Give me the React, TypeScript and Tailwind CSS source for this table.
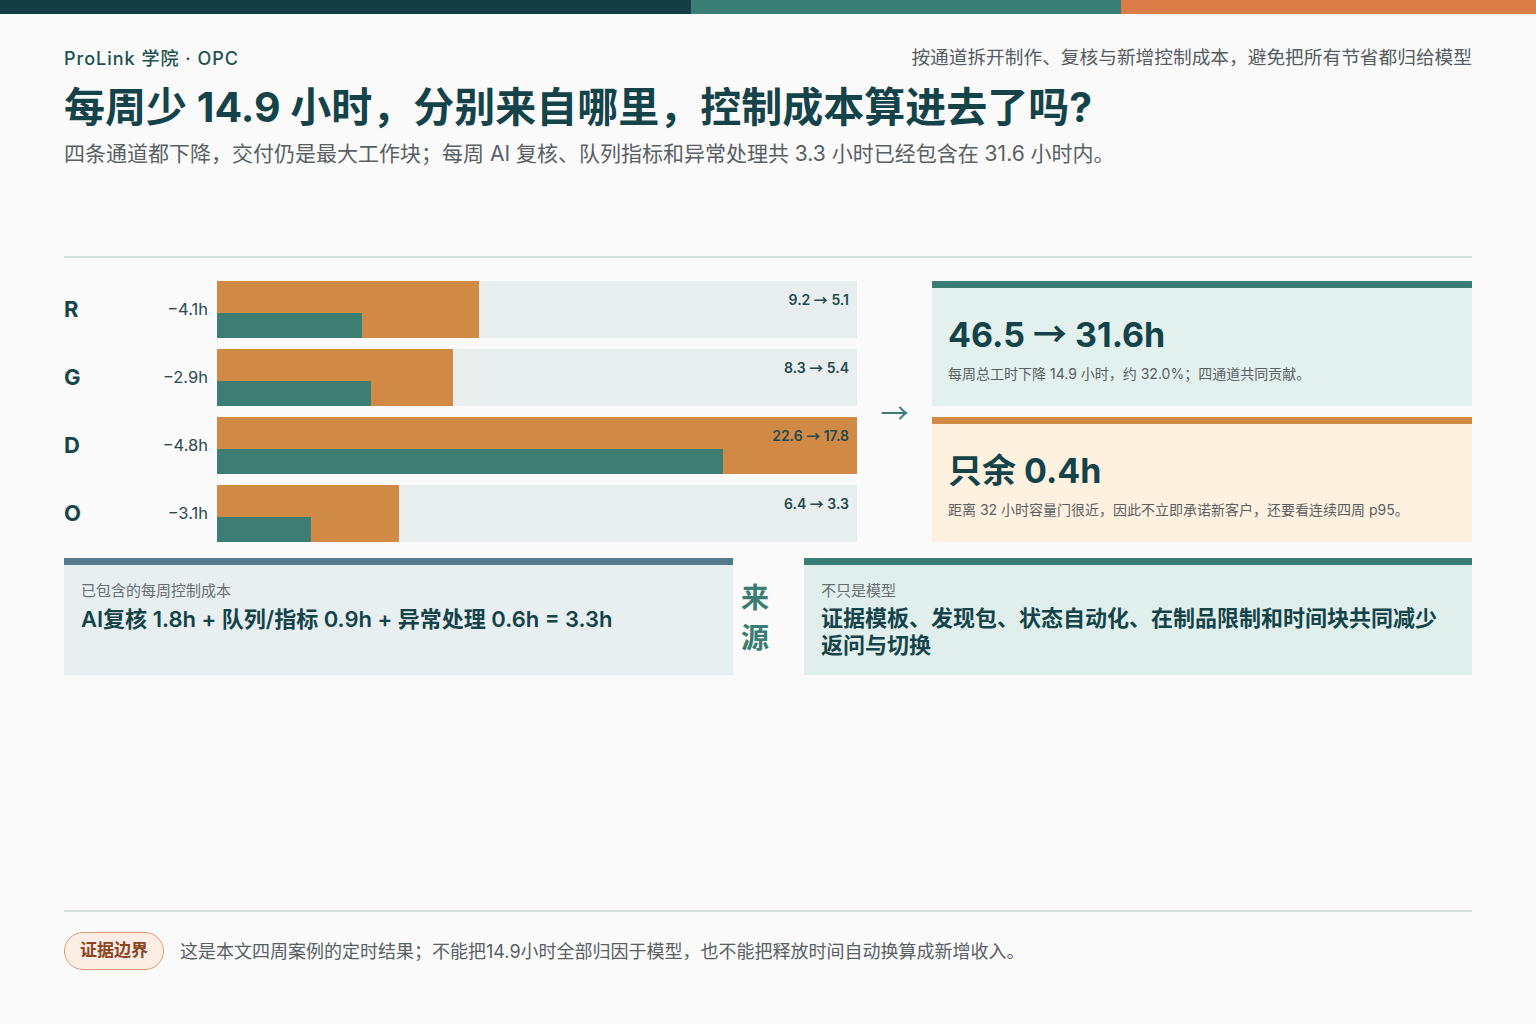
import React from 'react';

const FONT = '"Inter", "Noto Sans CJK SC", "Noto Sans", sans-serif';
const ARROW_FONT = '"Noto Sans CJK SC", "DejaVu Sans", sans-serif';

type Lane = { key: string; delta: string; before: number; after: number };

const lanes: Lane[] = [
  { key: 'R', delta: '−4.1h', before: 9.2, after: 5.1 },
  { key: 'G', delta: '−2.9h', before: 8.3, after: 5.4 },
  { key: 'D', delta: '−4.8h', before: 22.6, after: 17.8 },
  { key: 'O', delta: '−3.1h', before: 6.4, after: 3.3 },
];

const MAX = 22.5;

function Arrow() {
  return (
    <span className="inline-block leading-none" style={{ fontFamily: ARROW_FONT }}>
      →
    </span>
  );
}

function LaneRow({ lane }: { lane: Lane }) {
  return (
    <div className="flex h-[57px] items-center">
      <div className="w-[60px] text-[22px] font-bold text-[#174449]">{lane.key}</div>
      <div className="w-[84px] text-right text-[16.5px] text-[#2b4a4e]">{lane.delta}</div>
      <div className="relative ml-[9px] h-full flex-1 bg-[#e8eeed]">
        <div
          className="absolute left-0 top-0 h-full bg-[#d08a45]"
          style={{ width: `${Math.min(lane.before / MAX, 1) * 100}%` }}
        />
        <div
          className="absolute bottom-0 left-0 h-[25px] bg-[#3c7d74]"
          style={{ width: `${(lane.after / MAX) * 100}%` }}
        />
        <div className="absolute right-[8px] top-[8px] text-[14px] font-semibold leading-[22px] text-[#234a4f]">
          {lane.before} <Arrow /> {lane.after}
        </div>
      </div>
    </div>
  );
}

export default function App() {
  return (
    <div
      className="flex h-[1024px] w-[1536px] flex-col bg-[#fafafa] text-[#174449]"
      style={{ fontFamily: FONT }}
    >
      {/* colour strip */}
      <div className="flex h-[14px] w-full">
        <div className="w-[691px] bg-[#143d44]" />
        <div className="w-[430px] bg-[#3a7d74]" />
        <div className="flex-1 bg-[#d97c45]" />
      </div>

      <div className="flex flex-1 flex-col px-16">
        {/* header */}
        <div className="mt-[32px] flex h-[24px] items-center justify-between">
          <div className="text-[18px] font-medium tracking-[1px] text-[#1d5250]">ProLink 学院 · OPC</div>
          <div className="text-[18.7px] text-[#555b5f]">按通道拆开制作、复核与新增控制成本，避免把所有节省都归给模型</div>
        </div>
        <h1 className="mt-[13px] text-[41px] font-bold leading-[48px] text-[#15434a]">
          每周少 14.9 小时，分别来自哪里，控制成本算进去了吗?
        </h1>
        <p className="mt-[9px] text-[21px] leading-[28px] text-[#596064]">
          四条通道都下降，交付仍是最大工作块；每周 AI 复核、队列指标和异常处理共 3.3 小时已经包含在 31.6 小时内。
        </p>

        <div className="mt-[88px] h-[2px] bg-[#d3e3df]" />

        {/* chart + summary */}
        <div className="mt-[23px] flex">
          <div className="flex w-[793px] flex-col gap-[11px]">
            {lanes.map((l) => (
              <LaneRow key={l.key} lane={l} />
            ))}
          </div>
          <div
            className="flex w-[75px] items-center justify-center text-[28px] text-[#3a7d74]"
            style={{ fontFamily: ARROW_FONT }}
          >
            →
          </div>
          <div className="flex flex-1 flex-col gap-[11px]">
            <div className="h-[125px] border-t-[7px] border-[#3a7d74] bg-[#e2f1ed] px-[16px] pt-[25px]">
              <div className="text-[34px] font-bold leading-[44px] text-[#15434a]">
                46.5 <Arrow /> 31.6h
              </div>
              <div className="mt-[7px] text-[14px] leading-[20px] text-[#596064]">
                每周总工时下降 14.9 小时，约 32.0%；四通道共同贡献。
              </div>
            </div>
            <div className="h-[125px] border-t-[7px] border-[#d38a45] bg-[#fff1df] px-[16px] pt-[25px]">
              <div className="text-[34px] font-bold leading-[44px] text-[#15434a]">只余 0.4h</div>
              <div className="mt-[7px] text-[14px] leading-[20px] text-[#596064]">
                距离 32 小时容量门很近，因此不立即承诺新客户，还要看连续四周 p95。
              </div>
            </div>
          </div>
        </div>

        {/* sources */}
        <div className="mt-[16px] flex h-[117px]">
          <div className="w-[669px] border-t-[7px] border-[#527a8c] bg-[#e7eff1] px-[17px] pt-[15px]">
            <div className="text-[15px] leading-[22px] text-[#676d71]">已包含的每周控制成本</div>
            <div className="mt-[3px] text-[22px] font-semibold leading-[28px] text-[#15434a]">
              AI复核 1.8h + 队列/指标 0.9h + 异常处理 0.6h = 3.3h
            </div>
          </div>
          <div className="flex w-[71px] flex-col items-start pl-[8px] pt-[20px] text-[28px] font-bold leading-[40px] text-[#3a7d74]">
            <span>来</span>
            <span>源</span>
          </div>
          <div className="flex-1 border-t-[7px] border-[#3a7d74] bg-[#e0efeb] px-[17px] pt-[15px]">
            <div className="text-[15px] leading-[22px] text-[#676d71]">不只是模型</div>
            <div className="mt-[3px] text-[22px] font-bold leading-[27px] text-[#15434a]">
              证据模板、发现包、状态自动化、在制品限制和时间块共同减少返问与切换
            </div>
          </div>
        </div>

        {/* footer */}
        <div className="mt-auto h-[2px] bg-[#d8e2e0]" />
        <div className="mb-[54px] mt-[20px] flex items-center gap-[16px]">
          <div className="flex h-[38px] items-center rounded-full border border-[#dc9b72] bg-[#fdeee5] px-[15px] text-[17px] font-bold text-[#8a4524]">
            证据边界
          </div>
          <div className="text-[18px] text-[#596064]">
            这是本文四周案例的定时结果；不能把14.9小时全部归因于模型，也不能把释放时间自动换算成新增收入。
          </div>
        </div>
      </div>
    </div>
  );
}
